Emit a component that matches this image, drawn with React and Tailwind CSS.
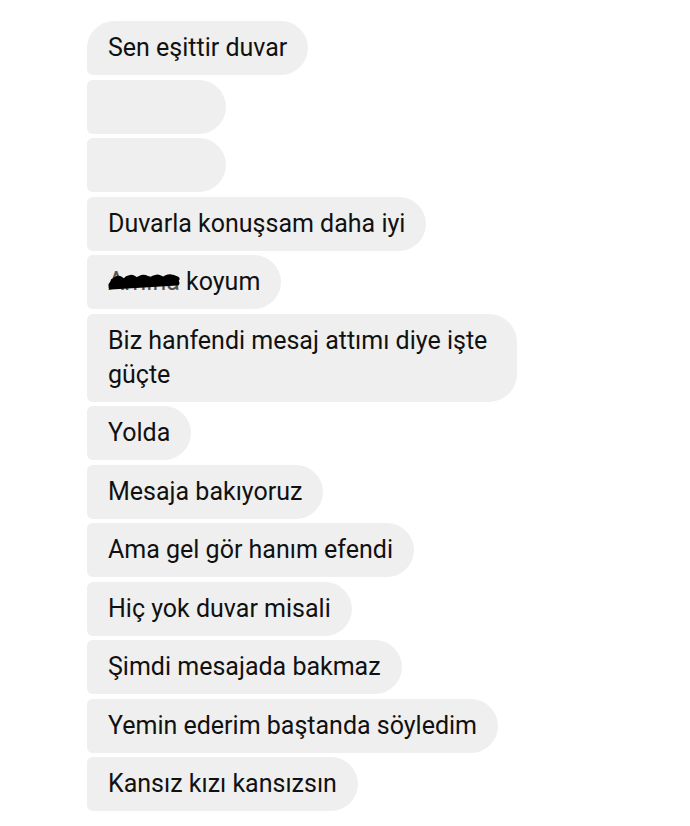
import React from 'react';

const messages = [
  { text: 'Sen eşittir duvar' },
  { blank: true },
  { blank: true },
  { text: 'Duvarla konuşsam daha iyi' },
  { redacted: true },
  { text: 'Biz hanfendi mesaj attımı diye işte güçte' },
  { text: 'Yolda' },
  { text: 'Mesaja bakıyoruz' },
  { text: 'Ama gel gör hanım efendi' },
  { text: 'Hiç yok duvar misali' },
  { text: 'Şimdi mesajada bakmaz' },
  { text: 'Yemin ederim baştanda söyledim' },
  { text: 'Kansız kızı kansızsın' },
];

const Scribble = () => (
  <svg
    className="absolute left-[0px] top-[7px] w-[72px] h-[18px]"
    viewBox="0 0 72 18"
    fill="none"
  >
    <path
      d="M3 13 C8 4 12 5 16 10 C20 4 25 4 29 9 C33 4 38 4 42 9 C46 4 51 4 55 8 C59 4 64 4 69 7 M3 15 L69 11 M5 9 L68 7 M4 12 L68 10"
      stroke="#000"
      strokeWidth="5"
      strokeLinecap="round"
      strokeLinejoin="round"
    />
  </svg>
);

const Bubble = ({ msg, first }) => {
  const corners = first ? 'rounded-tl-[28px] rounded-bl-[6px]' : 'rounded-l-[6px]';
  if (msg.blank) {
    return <div className={`bg-[#efefef] rounded-r-[28px] ${corners} w-[139px] h-[54px]`} />;
  }
  return (
    <div
      className={`bg-[#efefef] rounded-r-[28px] ${corners} max-w-[430px] px-[21px] py-[10px] text-[25px] leading-[34px] text-[#111]`}
    >
      {msg.redacted ? (
        <>
          <span className="relative inline-block text-[#555]">
            Amına
            <Scribble />
          </span>{' '}
          koyum
        </>
      ) : (
        msg.text
      )}
    </div>
  );
};

export default function App() {
  return (
    <div
      className="w-[690px] h-[826px] bg-white overflow-hidden pl-[87px] pt-[21px] flex flex-col items-start gap-[4.5px]"
      style={{ fontFamily: 'Roboto, "Noto Sans", sans-serif' }}
    >
      {messages.map((m, i) => (
        <Bubble key={i} msg={m} first={i === 0} />
      ))}
    </div>
  );
}
